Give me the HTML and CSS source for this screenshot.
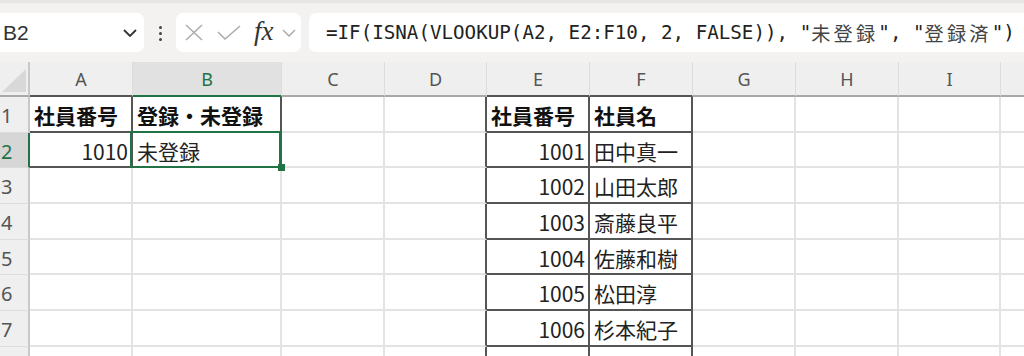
FILE: index.html
```html
<!DOCTYPE html>
<html lang="ja">
<head>
    <meta charset="UTF-8">
    <meta name="viewport" content="width=device-width, initial-scale=1.0">
    <title>社員番号 照合</title>
    <link rel="stylesheet" href="styles.css">
</head>
<body>
    <div class="toolbar">
        <div class="namebox">
            <span>B2</span>
            <svg class="chev" width="14" height="8" viewBox="0 0 14 8"><polyline points="1,1 7,7 13,1" fill="none" stroke="#333" stroke-width="1.8"/></svg>
        </div>
        <div class="dots"><i></i><i></i><i></i></div>
        <div class="fxbox">
            <svg class="ic-x" width="18" height="17" viewBox="0 0 18 17"><path d="M1 1 L17 16 M17 1 L1 16" stroke="#ababab" stroke-width="1.5" fill="none"/></svg>
            <svg class="ic-ok" width="24" height="15" viewBox="0 0 24 15"><polyline points="1,7 8,14 23,1" stroke="#ababab" stroke-width="1.5" fill="none"/></svg>
            <span class="fx">fx</span>
            <svg class="ic-chev" width="14" height="8" viewBox="0 0 14 8"><polyline points="1,1 7,7 13,1" fill="none" stroke="#ababab" stroke-width="1.5"/></svg>
        </div>
        <div class="formula">=IF(ISNA(VLOOKUP(A2, E2:F10, 2, FALSE)), "<span class="wide">未登録</span>", "<span class="wide">登録済</span>")</div>
    </div>

    <div class="sheet">
        <!-- column headers -->
        <div class="corner"></div>
        <div class="hd dk">A</div>
        <div class="hd sel">B</div>
        <div class="hd">C</div>
        <div class="hd">D</div>
        <div class="hd dk">E</div>
        <div class="hd dk">F</div>
        <div class="hd">G</div>
        <div class="hd">H</div>
        <div class="hd">I</div>
        <div class="hd">J</div>

        <!-- row 1 -->
        <div class="rh">1</div>
        <div class="c b br bb">社員番号</div>
        <div class="c b br bb">登録・未登録</div>
        <div class="c"></div>
        <div class="c br"></div>
        <div class="c b br bb">社員番号</div>
        <div class="c b br bb">社員名</div>
        <div class="c"></div>
        <div class="c"></div>
        <div class="c"></div>
        <div class="c"></div>

        <!-- row 2 -->
        <div class="rh sel">2</div>
        <div class="c num br bb">1010</div>
        <div class="c br bb active">未登録</div>
        <div class="c"></div>
        <div class="c br"></div>
        <div class="c num br bb">1001</div>
        <div class="c br bb">田中真一</div>
        <div class="c"></div>
        <div class="c"></div>
        <div class="c"></div>
        <div class="c"></div>

        <!-- row 3 -->
        <div class="rh">3</div>
        <div class="c"></div>
        <div class="c"></div>
        <div class="c"></div>
        <div class="c br"></div>
        <div class="c num br bb">1002</div>
        <div class="c br bb">山田太郎</div>
        <div class="c"></div>
        <div class="c"></div>
        <div class="c"></div>
        <div class="c"></div>

        <!-- row 4 -->
        <div class="rh">4</div>
        <div class="c"></div>
        <div class="c"></div>
        <div class="c"></div>
        <div class="c br"></div>
        <div class="c num br bb">1003</div>
        <div class="c br bb">斎藤良平</div>
        <div class="c"></div>
        <div class="c"></div>
        <div class="c"></div>
        <div class="c"></div>

        <!-- row 5 -->
        <div class="rh">5</div>
        <div class="c"></div>
        <div class="c"></div>
        <div class="c"></div>
        <div class="c br"></div>
        <div class="c num br bb">1004</div>
        <div class="c br bb">佐藤和樹</div>
        <div class="c"></div>
        <div class="c"></div>
        <div class="c"></div>
        <div class="c"></div>

        <!-- row 6 -->
        <div class="rh">6</div>
        <div class="c"></div>
        <div class="c"></div>
        <div class="c"></div>
        <div class="c br"></div>
        <div class="c num br bb">1005</div>
        <div class="c br bb">松田淳</div>
        <div class="c"></div>
        <div class="c"></div>
        <div class="c"></div>
        <div class="c"></div>

        <!-- row 7 -->
        <div class="rh">7</div>
        <div class="c"></div>
        <div class="c"></div>
        <div class="c"></div>
        <div class="c br"></div>
        <div class="c num br bb">1006</div>
        <div class="c br bb">杉本紀子</div>
        <div class="c"></div>
        <div class="c"></div>
        <div class="c"></div>
        <div class="c"></div>

        <!-- row 8 -->
        <div class="rh">8</div>
        <div class="c"></div>
        <div class="c"></div>
        <div class="c"></div>
        <div class="c br"></div>
        <div class="c num br bb">1007</div>
        <div class="c br bb">高橋美咲</div>
        <div class="c"></div>
        <div class="c"></div>
        <div class="c"></div>
        <div class="c"></div>
    </div>
</body>
</html>
```

FILE: styles.css
```css
body {
    margin: 0;
    height: 356px;
    overflow: hidden;
    background: #fff;
    font-family: "Noto Sans", "Noto Sans CJK JP", sans-serif;
}

/* formula bar */
.toolbar {
    height: 62px;
    box-sizing: border-box;
    border-top: 3px solid #e7e5e3;
    padding-top: 10px;
    background: #f3f2f1;
    display: flex;
    align-items: flex-start;
    overflow: hidden;
}
.namebox {
    flex: none;
    margin-left: -8px;
    width: 152px;
    height: 39px;
    box-sizing: border-box;
    padding: 0 7px 0 11px;
    background: #fff;
    border-radius: 7px;
    display: flex;
    align-items: center;
    justify-content: space-between;
    font: 21px "Liberation Sans", sans-serif;
    color: #333;
}
.dots {
    flex: none;
    width: 32px;
    padding-top: 13px;
    display: flex;
    flex-direction: column;
    align-items: center;
    gap: 3px;
}
.dots i {
    width: 3px;
    height: 3px;
    border-radius: 50%;
    background: #444;
}
.fxbox {
    flex: none;
    width: 125px;
    height: 39px;
    box-sizing: border-box;
    padding-left: 9px;
    background: #fff;
    border-radius: 7px;
    display: flex;
    align-items: center;
}
.ic-ok {
    margin-left: 14px;
}
.fx {
    margin-left: 13px;
    font: italic 27px "Liberation Serif", serif;
    color: #333;
    line-height: 1;
    margin-top: -2px;
}
.ic-chev {
    margin-left: 8px;
}
.formula {
    flex: none;
    width: 760px;
    margin-left: 8px;
    height: 39px;
    box-sizing: border-box;
    padding-left: 17px;
    background: #fff;
    border-radius: 7px 0 0 7px;
    display: flex;
    align-items: center;
    white-space: nowrap;
    font: 19.2px "DejaVu Sans Mono", "Noto Sans CJK JP", monospace;
    color: #222;
}
.formula .wide {
    font-family: "Noto Sans CJK JP", sans-serif;
    letter-spacing: 3.2px;
    color: #444;
}

/* grid */
.sheet {
    display: grid;
    grid-template-columns: 30px 103px 149px 103px 102px 103px 103px 103px 103px 102px 103px;
    grid-template-rows: 35px;
    grid-auto-rows: 35.7px;
}
.corner {
    position: relative;
    background: #efefef;
    border-right: 2px solid #c8c8c8;
    border-bottom: 2px solid #a8a8a8;
}
.corner::after {
    content: "";
    position: absolute;
    right: 2px;
    bottom: 3px;
    width: 24px;
    height: 23px;
    background: #d8d8d8;
    clip-path: polygon(100% 0, 100% 100%, 0 100%);
}
.hd {
    background: #efefef;
    border-right: 1px solid #dcdcdc;
    border-bottom: 2px solid #a8a8a8;
    display: flex;
    align-items: center;
    justify-content: center;
    font-size: 18px;
    color: #555;
}
.hd.dk {
    border-bottom-color: #555;
}
.hd.sel {
    background: #e1e1e1;
    color: #217346;
    border-bottom-color: #217346;
}
.rh {
    background: #efefef;
    border-right: 2px solid #c8c8c8;
    border-bottom: 1px solid #dcdcdc;
    display: flex;
    align-items: center;
    padding: 2px 0 0 1px;
    font-size: 20px;
    color: #555;
}
.rh.sel {
    background: #d6d6d6;
    color: #217346;
    border-right-color: #217346;
}
.c {
    border-right: 2px solid #e3e3e3;
    border-bottom: 2px solid #e3e3e3;
    display: flex;
    align-items: center;
    padding: 2px 3px 0 4px;
    white-space: nowrap;
    font: 21px "Noto Sans CJK JP", sans-serif;
    color: #222;
}
.c.b {
    font-weight: 700;
    color: #111;
}
.c.num {
    justify-content: flex-end;
}
.c.br {
    border-right-color: #555;
}
.c.bb {
    border-bottom-color: #555;
}

/* active cell */
.active {
    position: relative;
}
.active::before {
    content: "";
    position: absolute;
    left: -3px;
    top: -2px;
    right: -1px;
    bottom: -2px;
    border: 2px solid #217346;
}
.active::after {
    content: "";
    position: absolute;
    right: -5px;
    bottom: -5px;
    width: 7px;
    height: 7px;
    background: #217346;
}
```
